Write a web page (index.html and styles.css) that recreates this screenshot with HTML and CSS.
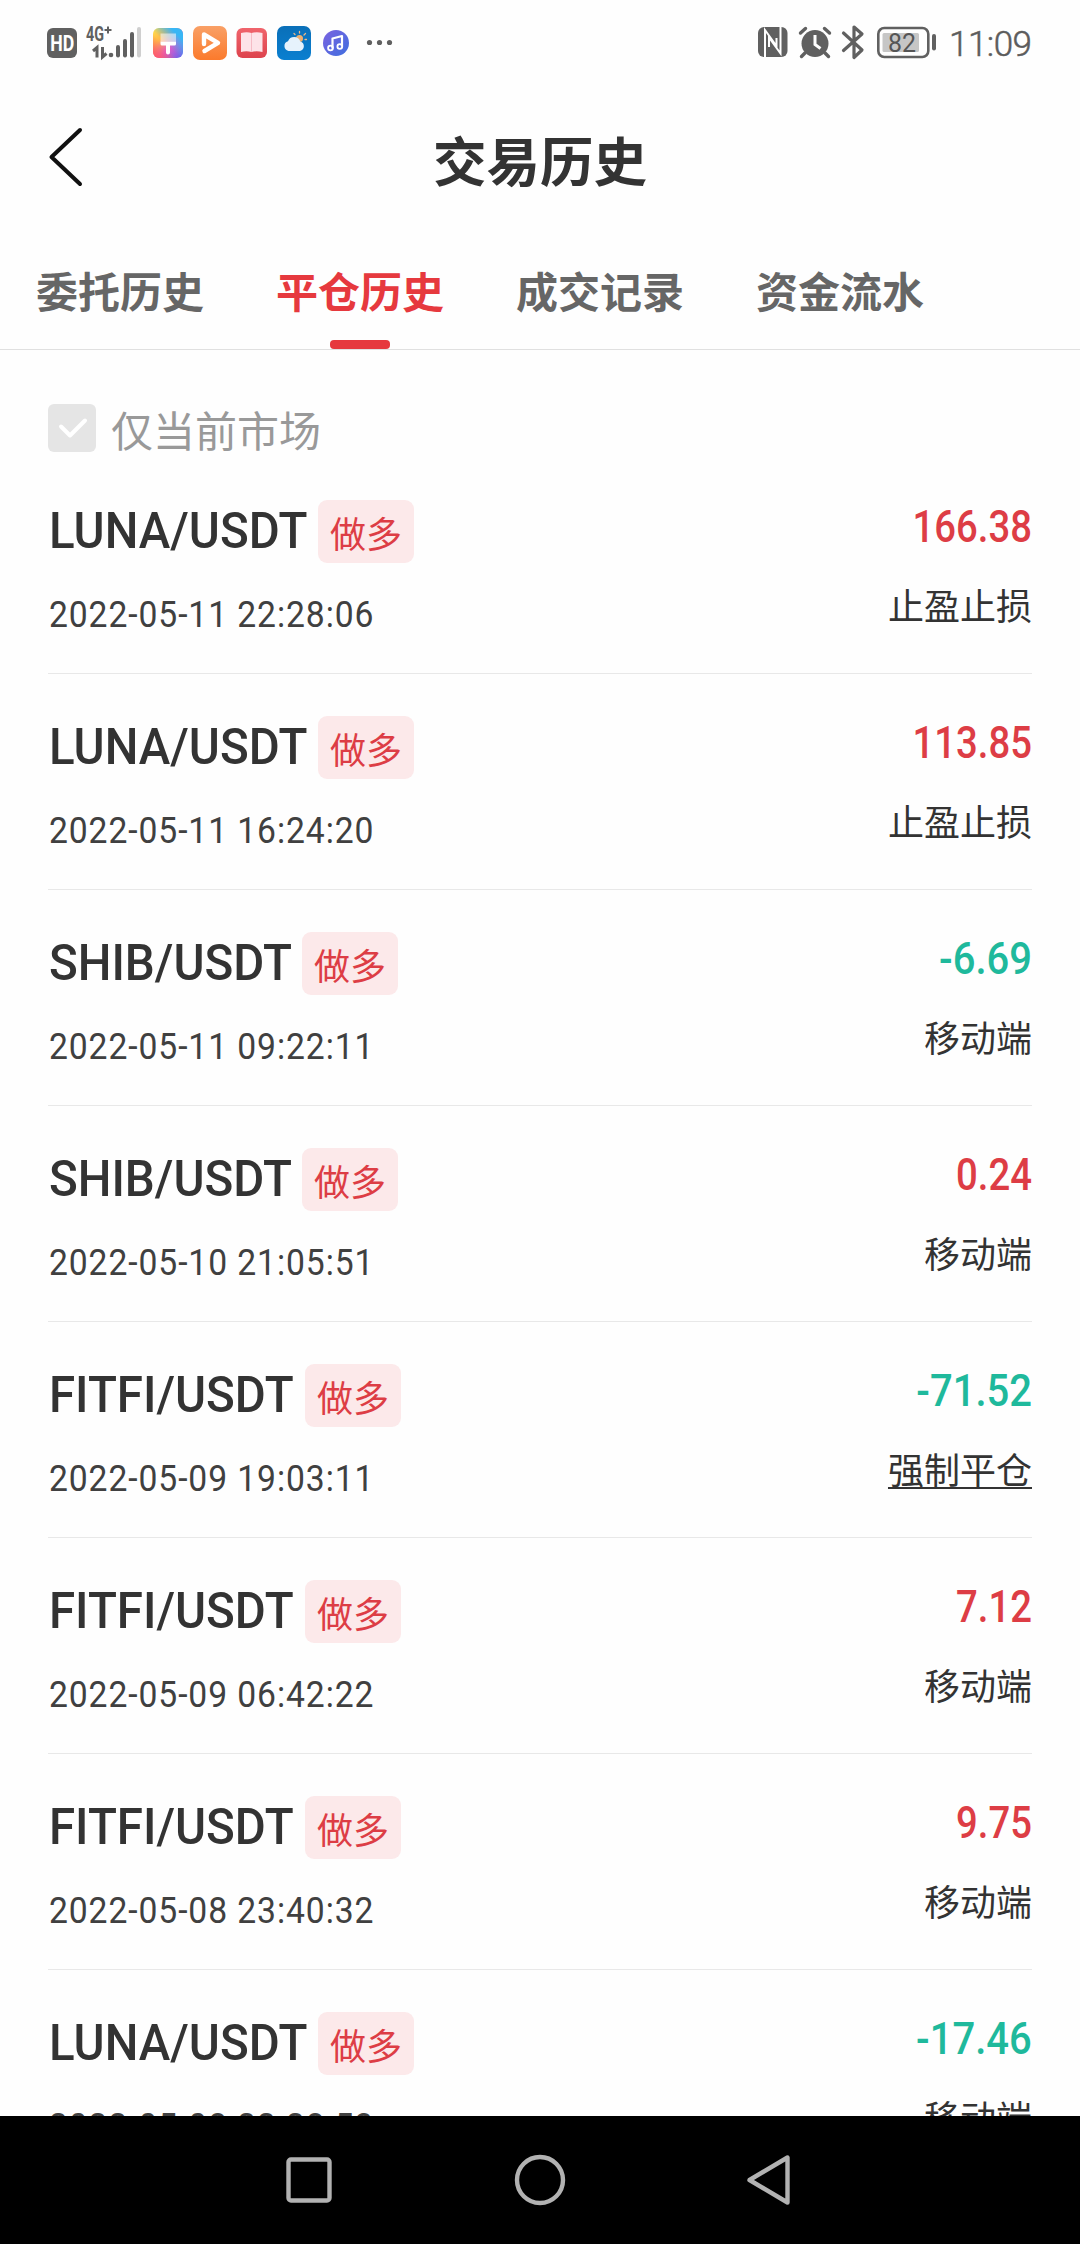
FILE: index.html
```html
<!DOCTYPE html>
<html lang="zh-CN">
<head>
<meta charset="utf-8">
<title>交易历史</title>
<link rel="stylesheet" href="styles.css">
</head>
<body>
<div class="screen">
  <div class="statusbar">
    <svg class="status-left" width="360" height="84" viewBox="40 0 360 84">
      <defs>
        <linearGradient id="g-theme" x1="0" y1="0" x2="1" y2="1"><stop offset="0" stop-color="#ffe24a"/><stop offset=".3" stop-color="#ffb84a"/><stop offset=".6" stop-color="#e35bc8"/><stop offset="1" stop-color="#5a62f0"/></linearGradient>
        <linearGradient id="g-sky" x1="0" y1="1" x2="1" y2="0"><stop offset=".45" stop-color="#38b6f5" stop-opacity="0"/><stop offset=".8" stop-color="#38b6f5"/></linearGradient>
        <linearGradient id="g-warm" x1="1" y1="0" x2="0" y2="1"><stop offset=".6" stop-color="#ff5a5a" stop-opacity="0"/><stop offset=".95" stop-color="#ff5a6a"/></linearGradient>
        <linearGradient id="g-video" x1="0" y1="0" x2="0" y2="1"><stop offset="0" stop-color="#f9a066"/><stop offset="1" stop-color="#fb7a2c"/></linearGradient>
        <linearGradient id="g-book" x1="0" y1="0" x2="0" y2="1"><stop offset="0" stop-color="#f0646c"/><stop offset="1" stop-color="#dd434d"/></linearGradient>
        <linearGradient id="g-weather" x1="0" y1="0" x2="0" y2="1"><stop offset="0" stop-color="#0a6fb8"/><stop offset="1" stop-color="#0a7fd0"/></linearGradient>
        <linearGradient id="g-music" x1="0" y1="0" x2="1" y2="1"><stop offset="0" stop-color="#7b62e0"/><stop offset="1" stop-color="#3f6fdf"/></linearGradient>
      </defs>
      <rect x="47" y="28" width="30" height="30" rx="6" fill="#606060"/>
      <text class="hd" x="50.2" y="50.5" textLength="24" lengthAdjust="spacingAndGlyphs">HD</text>
      <text class="net" x="86" y="40.5" textLength="18" lengthAdjust="spacingAndGlyphs">4G</text>
      <path d="M104.500 30h7M108 26.500v7" stroke="#606060" stroke-width="2"/>
      <path d="M93 51l4-3.500v10M102.500 47v10l4-3.500" fill="none" stroke="#606060" stroke-width="3"/>
      <g fill="#606060"><circle cx="111" cy="55" r="2.300"/><rect x="116" y="45" width="4" height="12.500" rx="2"/><rect x="123" y="39" width="4" height="18.500" rx="2"/><rect x="130" y="32" width="4" height="25.500" rx="2"/></g>
      <rect x="137" y="27" width="4" height="30.500" rx="2" fill="#cfcfcf"/>
      <rect x="153" y="28" width="30" height="30" rx="6" fill="url(#g-theme)"/>
      <rect x="153" y="28" width="30" height="30" rx="6" fill="url(#g-sky)"/>
      <rect x="153" y="28" width="30" height="30" rx="6" fill="url(#g-warm)"/>
      <path d="M160.500 33.500h15.500v8h-15.500z" fill="#fff" opacity=".55"/>
      <path d="M160.500 41.500h15.500v2.500q0 1.500-1.500 1.500h-4.500v7q0 2-2 2t-2-2v-7h-4q-1.500 0-1.500-1.500z" fill="#fff"/>
      <rect x="193" y="26" width="34" height="34" rx="7" fill="url(#g-video)"/>
      <path d="M204 44V34.500L218 42.800L204.500 51" fill="none" stroke="#fff" stroke-width="4.400" stroke-linejoin="round" stroke-linecap="round"/>
      <rect x="236.500" y="28" width="30.500" height="30" rx="6" fill="url(#g-book)"/>
      <path d="M241 33q6-1.500 10.500 0v19q-5-1.500-10.500 0zM251.500 33q5-1.500 11 0v19q-6-1.500-11 0z" fill="#fde3e8"/>
      <path d="M251.500 33v19" stroke="#f5bcc5" stroke-width="1"/>
      <rect x="277" y="26" width="34" height="34" rx="7" fill="url(#g-weather)"/>
      <circle cx="299.500" cy="38.500" r="3.500" fill="#f0b070"/>
      <path d="M299.500 33v-1.500M304 35l1.500-1.500M305 39.500h1.500M295 34.500l-1-1" stroke="#e8b888" stroke-width="1.300" stroke-linecap="round"/>
      <path d="M288.500 51a5 5 0 0 1-.5-9.700a6.500 6.500 0 0 1 12.300.2a4.900 4.900 0 0 1-.3 9.500z" fill="#e6f2fc"/>
      <circle cx="336" cy="43" r="13" fill="url(#g-music)"/>
      <path d="M332.500 48.500V38.500l9.500-2.500v10.500" fill="none" stroke="#fff" stroke-width="2.200" stroke-linejoin="round"/>
      <circle cx="330.500" cy="48" r="2.400" fill="none" stroke="#fff" stroke-width="1.800"/>
      <circle cx="339.800" cy="46.500" r="2.400" fill="none" stroke="#fff" stroke-width="1.800"/>
      <g fill="#606060"><circle cx="369.500" cy="42.500" r="2.600"/><circle cx="379.500" cy="42.500" r="2.600"/><circle cx="389.500" cy="42.500" r="2.600"/></g>
    </svg>
    <svg class="status-right" width="290" height="84" viewBox="750 0 290 84">
      <rect x="758" y="27" width="29.500" height="30" rx="6" fill="#606060"/>
      <path d="M765 57V30L776.500 46V38M780.500 27v26.500L769 37.500V47" fill="none" stroke="#fff" stroke-width="2"/>
      <circle cx="815" cy="43.500" r="13.500" fill="#606060"/>
      <path d="M800.500 33l5-4.500M829.500 33l-5-4.500M805 53l-3.500 3.500M825 53l3.500 3.500" stroke="#606060" stroke-width="3.400" stroke-linecap="round"/>
      <path d="M815 35v9.500l5.500 4" fill="none" stroke="#fff" stroke-width="3"/>
      <path d="M843.500 33l18.500 17-8 7.500V27l8 7-18.500 16.500" fill="none" stroke="#606060" stroke-width="3.200" stroke-linejoin="round" stroke-linecap="round"/>
      <rect x="878.300" y="28" width="50" height="29" rx="6" fill="none" stroke="#606060" stroke-width="2.600"/>
      <rect x="882.500" y="33" width="36.500" height="19" rx="1.500" fill="#c6c6c6"/>
      <text class="battery" x="888" y="51.500" textLength="28" lengthAdjust="spacingAndGlyphs">82</text>
      <rect x="932" y="34" width="4" height="16.500" rx="2" fill="#606060"/>
      <text class="clock" x="949" y="56" textLength="83" lengthAdjust="spacing">11:09</text>
    </svg>
  </div>

  <header class="header">
    <svg class="back" width="40" height="64" viewBox="0 0 40 64"><path d="M34 5L5.500 32L34 59" fill="none" stroke="#111" stroke-width="4" stroke-linecap="round" stroke-linejoin="round"/></svg>
    <h1 class="title">交易历史</h1>
  </header>

  <nav class="tabs">
    <div class="tab">委托历史</div>
    <div class="tab active">平仓历史</div>
    <div class="tab">成交记录</div>
    <div class="tab">资金流水</div>
  </nav>

  <main class="content">
    <label class="filter">
      <svg class="check" width="48" height="48" viewBox="0 0 48 48"><rect width="48" height="48" rx="6" fill="#e5e5e5"/><path d="M13 22.500L22 31.500L37 16.500" fill="none" stroke="#fff" stroke-width="4" stroke-linecap="round" stroke-linejoin="round"/></svg>
      <span class="filter-text">仅当前市场</span>
    </label>
    <ul class="list">
      <li class="row"><div class="left"><div class="pair luna"><span class="name">LUNA/USDT</span><span class="badge">做多</span></div><div class="time">2022-05-11 22:28:06</div></div><div class="right"><div class="amount up">166.38</div><div class="kind">止盈止损</div></div></li>
      <li class="row"><div class="left"><div class="pair luna"><span class="name">LUNA/USDT</span><span class="badge">做多</span></div><div class="time">2022-05-11 16:24:20</div></div><div class="right"><div class="amount up">113.85</div><div class="kind">止盈止损</div></div></li>
      <li class="row"><div class="left"><div class="pair shib"><span class="name">SHIB/USDT</span><span class="badge">做多</span></div><div class="time">2022-05-11 09:22:11</div></div><div class="right"><div class="amount down">-6.69</div><div class="kind">移动端</div></div></li>
      <li class="row"><div class="left"><div class="pair shib"><span class="name">SHIB/USDT</span><span class="badge">做多</span></div><div class="time">2022-05-10 21:05:51</div></div><div class="right"><div class="amount up">0.24</div><div class="kind">移动端</div></div></li>
      <li class="row"><div class="left"><div class="pair fitfi"><span class="name">FITFI/USDT</span><span class="badge">做多</span></div><div class="time">2022-05-09 19:03:11</div></div><div class="right"><div class="amount down">-71.52</div><div class="kind forced">强制平仓</div></div></li>
      <li class="row"><div class="left"><div class="pair fitfi"><span class="name">FITFI/USDT</span><span class="badge">做多</span></div><div class="time">2022-05-09 06:42:22</div></div><div class="right"><div class="amount up">7.12</div><div class="kind">移动端</div></div></li>
      <li class="row"><div class="left"><div class="pair fitfi"><span class="name">FITFI/USDT</span><span class="badge">做多</span></div><div class="time">2022-05-08 23:40:32</div></div><div class="right"><div class="amount up">9.75</div><div class="kind">移动端</div></div></li>
      <li class="row"><div class="left"><div class="pair luna"><span class="name">LUNA/USDT</span><span class="badge">做多</span></div><div class="time">2022-05-08 22:28:53</div></div><div class="right"><div class="amount down">-17.46</div><div class="kind">移动端</div></div></li>
    </ul>
  </main>

  <footer class="navbar">
    <svg width="54" height="54" viewBox="-27 -27 54 54"><rect x="-20.500" y="-20.500" width="41" height="41" rx="2.500"/></svg>
    <svg width="54" height="54" viewBox="-27 -27 54 54"><circle r="23"/></svg>
    <svg width="54" height="54" viewBox="-27 -27 54 54"><path d="M-21.500 0L16.500-22.500V22.500Z"/></svg>
  </footer>
</div>
</body>
</html>
```

FILE: styles.css
```css
* { box-sizing: border-box; }
body {
  margin: 0;
  background: #fefefe;
  color: #333;
  font-family: Roboto, "Noto Sans CJK SC", sans-serif;
}
.screen {
  width: 1080px;
  height: 2244px;
  display: flex;
  flex-direction: column;
  overflow: hidden;
}
.statusbar {
  flex: none;
  height: 84px;
  display: flex;
  justify-content: space-between;
  padding: 0 40px;
}
.hd { font: 700 22px Roboto, sans-serif; fill: #fff; }
.net { font: 700 20px Roboto, sans-serif; fill: #606060; }
.battery { font: 400 26px Roboto, sans-serif; fill: #555; }
.clock { font: 300 35px Roboto, sans-serif; fill: #5c5c5c; stroke: #5c5c5c; stroke-width: .5px; }

.header {
  flex: none;
  height: 156px;
  display: grid;
  grid-template-columns: 40px 1fr 40px;
  align-items: center;
  padding: 0 46px;
}
.back { margin-bottom: 10px; }
.title {
  margin: 0;
  padding-top: 4px;
  text-align: center;
  font-size: 53.5px;
  line-height: 80px;
  font-weight: 700;
}

.tabs {
  flex: none;
  height: 110px;
  display: flex;
  border-bottom: 1px solid #e0e0e0;
}
.tab {
  width: 240px;
  padding-top: 23px;
  text-align: center;
  font-size: 42px;
  line-height: 62px;
  font-weight: 700;
  color: #666;
}
.active { color: #e6393e; }
.active::after {
  content: "";
  display: block;
  width: 60px;
  height: 9px;
  margin: 15px auto 0;
  border-radius: 4px;
  background: #e6393e;
}

.content {
  flex: 1;
  min-height: 0;
  overflow: hidden;
  padding: 54px 48px 0;
}
.filter {
  display: flex;
  gap: 15px;
  height: 54px;
  color: #999;
}
.filter-text { padding-top: 2px; font-size: 42px; line-height: 54px; }
.list { margin: 0; padding: 0; list-style: none; }
.row {
  height: 216px;
  display: flex;
  justify-content: space-between;
  border-bottom: 1px solid #e8e8e8;
}
.left { padding-top: 42px; }
.pair { display: grid; height: 63px; }
.luna { grid-template-columns: 270px 96px; }
.shib { grid-template-columns: 254px 96px; }
.fitfi { grid-template-columns: 257px 96px; }
.name {
  padding-left: 1px;
  font-size: 50px;
  line-height: 62px;
  font-weight: 500;
  white-space: nowrap;
  transform: scaleX(.95);
  transform-origin: left;
}
.badge {
  height: 63px;
  border-radius: 9px;
  background: #fce9ea;
  color: #dd3d45;
  text-align: center;
  font-size: 36px;
  line-height: 73px;
}
.time {
  margin-top: 28px;
  padding-left: 1px;
  font-size: 36.6px;
  line-height: 48px;
  color: #404040;
  letter-spacing: 1px;
  white-space: nowrap;
  transform: scaleX(.92);
  transform-origin: left;
}
.right { padding-top: 42px; text-align: right; }
.amount {
  font-size: 43.5px;
  line-height: 55px;
  font-weight: 500;
  transform: scaleX(.88);
  transform-origin: right;
}
.up { color: #dd3d45; }
.down { color: #1fb99c; transform: scaleX(.92); }
.kind { margin-top: 27px; font-size: 36px; line-height: 52px; }
.forced {
  text-decoration: underline 2px;
  text-underline-offset: 3px;
  text-decoration-skip-ink: none;
}

.navbar {
  flex: none;
  height: 128px;
  background: #000;
  display: flex;
  justify-content: center;
  align-items: center;
  gap: 177px;
}
.navbar svg { fill: none; stroke: #b2b2b2; stroke-width: 4.400; stroke-linejoin: round; }
```
